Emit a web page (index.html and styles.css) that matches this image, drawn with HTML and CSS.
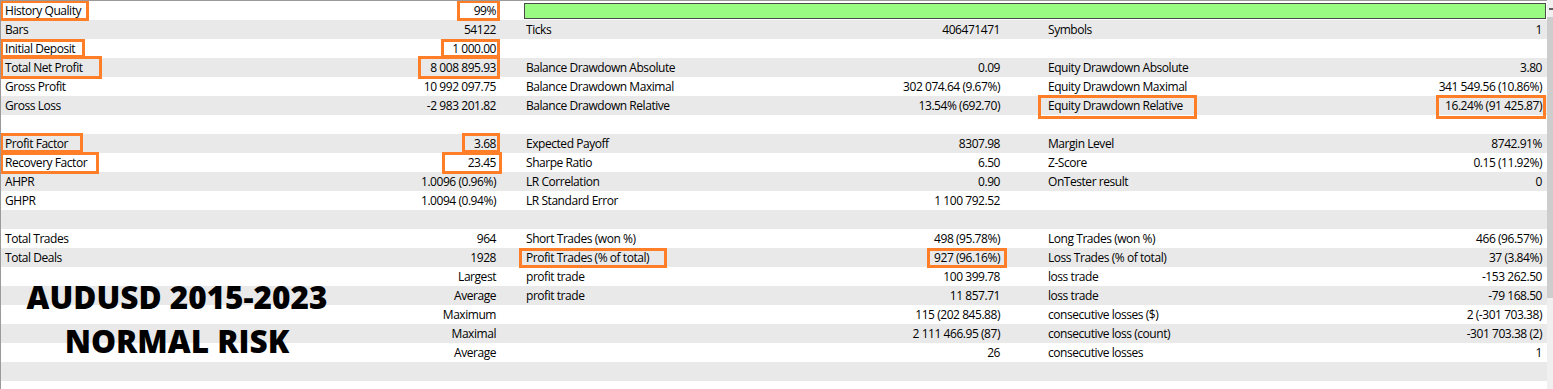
FILE: index.html
```html
<!DOCTYPE html>
<html>
<head>
<meta charset="utf-8">
<link rel="stylesheet" href="styles.css">
</head>
<body>
<div class="window">
  <div class="report">
    <div class="row">
      <div class="cell c1"><span>History Quality</span><span>99%</span></div>
      <div class="cell span23"><div class="quality"></div></div>
    </div>
    <div class="row">
      <div class="cell c1"><span>Bars</span><span>54122</span></div>
      <div class="cell c2"><span>Ticks</span><span>406471471</span></div>
      <div class="cell c3"><span>Symbols</span><span>1</span></div>
    </div>
    <div class="row">
      <div class="cell c1"><span>Initial Deposit</span><span>1 000.00</span></div>
      <div class="cell c2"></div>
      <div class="cell c3"></div>
    </div>
    <div class="row">
      <div class="cell c1"><span>Total Net Profit</span><span>8 008 895.93</span></div>
      <div class="cell c2"><span>Balance Drawdown Absolute</span><span>0.09</span></div>
      <div class="cell c3"><span>Equity Drawdown Absolute</span><span>3.80</span></div>
    </div>
    <div class="row">
      <div class="cell c1"><span>Gross Profit</span><span>10 992 097.75</span></div>
      <div class="cell c2"><span>Balance Drawdown Maximal</span><span>302 074.64 (9.67%)</span></div>
      <div class="cell c3"><span>Equity Drawdown Maximal</span><span>341 549.56 (10.86%)</span></div>
    </div>
    <div class="row">
      <div class="cell c1"><span>Gross Loss</span><span>-2 983 201.82</span></div>
      <div class="cell c2"><span>Balance Drawdown Relative</span><span>13.54% (692.70)</span></div>
      <div class="cell c3"><span>Equity Drawdown Relative</span><span>16.24% (91 425.87)</span></div>
    </div>
    <div class="row"></div>
    <div class="row">
      <div class="cell c1"><span>Profit Factor</span><span>3.68</span></div>
      <div class="cell c2"><span>Expected Payoff</span><span>8307.98</span></div>
      <div class="cell c3"><span>Margin Level</span><span>8742.91%</span></div>
    </div>
    <div class="row">
      <div class="cell c1"><span>Recovery Factor</span><span>23.45</span></div>
      <div class="cell c2"><span>Sharpe Ratio</span><span>6.50</span></div>
      <div class="cell c3"><span>Z-Score</span><span>0.15 (11.92%)</span></div>
    </div>
    <div class="row">
      <div class="cell c1"><span>AHPR</span><span>1.0096 (0.96%)</span></div>
      <div class="cell c2"><span>LR Correlation</span><span>0.90</span></div>
      <div class="cell c3"><span>OnTester result</span><span>0</span></div>
    </div>
    <div class="row">
      <div class="cell c1"><span>GHPR</span><span>1.0094 (0.94%)</span></div>
      <div class="cell c2"><span>LR Standard Error</span><span>1 100 792.52</span></div>
      <div class="cell c3"></div>
    </div>
    <div class="row"></div>
    <div class="row">
      <div class="cell c1"><span>Total Trades</span><span>964</span></div>
      <div class="cell c2"><span>Short Trades (won %)</span><span>498 (95.78%)</span></div>
      <div class="cell c3"><span>Long Trades (won %)</span><span>466 (96.57%)</span></div>
    </div>
    <div class="row">
      <div class="cell c1"><span>Total Deals</span><span>1928</span></div>
      <div class="cell c2"><span>Profit Trades (% of total)</span><span>927 (96.16%)</span></div>
      <div class="cell c3"><span>Loss Trades (% of total)</span><span>37 (3.84%)</span></div>
    </div>
    <div class="row">
      <div class="cell c1"><span></span><span>Largest</span></div>
      <div class="cell c2"><span>profit trade</span><span>100 399.78</span></div>
      <div class="cell c3"><span>loss trade</span><span>-153 262.50</span></div>
    </div>
    <div class="row">
      <div class="cell c1"><span></span><span>Average</span></div>
      <div class="cell c2"><span>profit trade</span><span>11 857.71</span></div>
      <div class="cell c3"><span>loss trade</span><span>-79 168.50</span></div>
    </div>
    <div class="row">
      <div class="cell c1"><span></span><span>Maximum</span></div>
      <div class="cell c2"><span></span><span>115 (202 845.88)</span></div>
      <div class="cell c3"><span>consecutive losses ($)</span><span>2 (-301 703.38)</span></div>
    </div>
    <div class="row">
      <div class="cell c1"><span></span><span>Maximal</span></div>
      <div class="cell c2"><span></span><span>2 111 466.95 (87)</span></div>
      <div class="cell c3"><span>consecutive loss (count)</span><span>-301 703.38 (2)</span></div>
    </div>
    <div class="row">
      <div class="cell c1"><span></span><span>Average</span></div>
      <div class="cell c2"><span></span><span>26</span></div>
      <div class="cell c3"><span>consecutive losses</span><span>1</span></div>
    </div>
    <div class="row"></div>
    <div class="row"></div>

    <div class="mark m-hq"></div>
    <div class="mark m-hqv"></div>
    <div class="mark m-id"></div>
    <div class="mark m-idv"></div>
    <div class="mark m-np"></div>
    <div class="mark m-npv"></div>
    <div class="mark m-pf"></div>
    <div class="mark m-pfv"></div>
    <div class="mark m-rf"></div>
    <div class="mark m-rfv"></div>
    <div class="mark m-pt"></div>
    <div class="mark m-ptv"></div>
    <div class="mark m-edr"></div>
    <div class="mark m-edrv"></div>

    <div class="caption">
      <div>AUDUSD 2015-2023</div>
      <div>NORMAL RISK</div>
    </div>
  </div>
  <div class="scrollbar">
    <div class="sb-arrow"><span></span></div>
    <div class="sb-thumb"></div>
    <div class="sb-track"></div>
  </div>
</div>
</body>
</html>
```

FILE: styles.css
```css
html, body {
  margin: 0;
  padding: 0;
  background: #ffffff;
}
body {
  font-family: "Open Sans", "Noto Sans", "DejaVu Sans", sans-serif;
  font-size: 12px;
  letter-spacing: -0.45px;
  color: #000000;
  overflow: hidden;
}
.window {
  display: flex;
  width: 1553px;
  height: 389px;
  overflow: hidden;
}
.report {
  position: relative;
  flex: 0 0 1547px;
  border-top: 1px solid #9a9a9a;
  border-left: 1px solid #9a9a9a;
  box-sizing: border-box;
  overflow: hidden;
}
.row {
  display: grid;
  grid-template-columns: 520px 522px 1fr;
  height: 19px;
  background: #ffffff;
}
.row:nth-child(even) {
  background: #e9e9e9;
}
.cell {
  display: flex;
  justify-content: space-between;
  align-items: center;
  white-space: nowrap;
  line-height: 19px;
}
.c1 { padding: 0 25px 0 4px; }
.c2 { padding: 0 43px 0 5px; }
.c3 { padding: 0 5px 0 5px; }
.span23 {
  grid-column: 2 / 4;
  padding: 2px 1px 1px 3px;
  align-items: stretch;
}
.quality {
  flex: 1;
  background: #99fb82;
  border: 1px solid #4a4a4a;
}
.mark {
  position: absolute;
  border: 3px solid #ff7e27;
  box-sizing: border-box;
}
.m-hq   { left: -1px;  top: -1px;  width: 89px;  height: 21px; }
.m-hqv  { left: 456px; top: -1px;  width: 43px;  height: 21px; }
.m-id   { left: -1px;  top: 38px;  width: 85px;  height: 19px; }
.m-idv  { left: 440px; top: 38px;  width: 59px;  height: 19px; }
.m-np   { left: -1px;  top: 55px;  width: 102px; height: 23px; }
.m-npv  { left: 417px; top: 55px;  width: 82px;  height: 23px; }
.m-pf   { left: -1px;  top: 132px; width: 83px;  height: 20px; }
.m-pfv  { left: 461px; top: 132px; width: 38px;  height: 20px; }
.m-rf   { left: -1px;  top: 151px; width: 99px;  height: 22px; }
.m-rfv  { left: 441px; top: 151px; width: 60px;  height: 22px; }
.m-pt   { left: 518px; top: 247px; width: 148px; height: 20px; }
.m-ptv  { left: 926px; top: 247px; width: 80px;  height: 20px; }
.m-edr  { left: 1037px; top: 94px; width: 159px; height: 24px; }
.m-edrv { left: 1435px; top: 94px; width: 110px; height: 24px; }
.caption {
  position: absolute;
  left: 0;
  top: 274px;
  width: 352px;
  text-align: center;
  font-family: "Open Sans", "Noto Sans", sans-serif;
  font-weight: 800;
  font-size: 31.5px;
  letter-spacing: 0;
  line-height: 44px;
  color: #000000;
}
.scrollbar {
  flex: 0 0 6px;
  display: flex;
  flex-direction: column;
  background: #f0f0f0;
}
.sb-arrow {
  height: 17px;
  display: flex;
  align-items: center;
  justify-content: center;
}
.sb-arrow span {
  display: block;
  width: 4px;
  height: 2px;
  margin-left: 1px;
  background: #606060;
}
.sb-thumb {
  height: 281px;
  background: #cdcdcd;
}
.sb-track {
  flex: 1;
}
```
